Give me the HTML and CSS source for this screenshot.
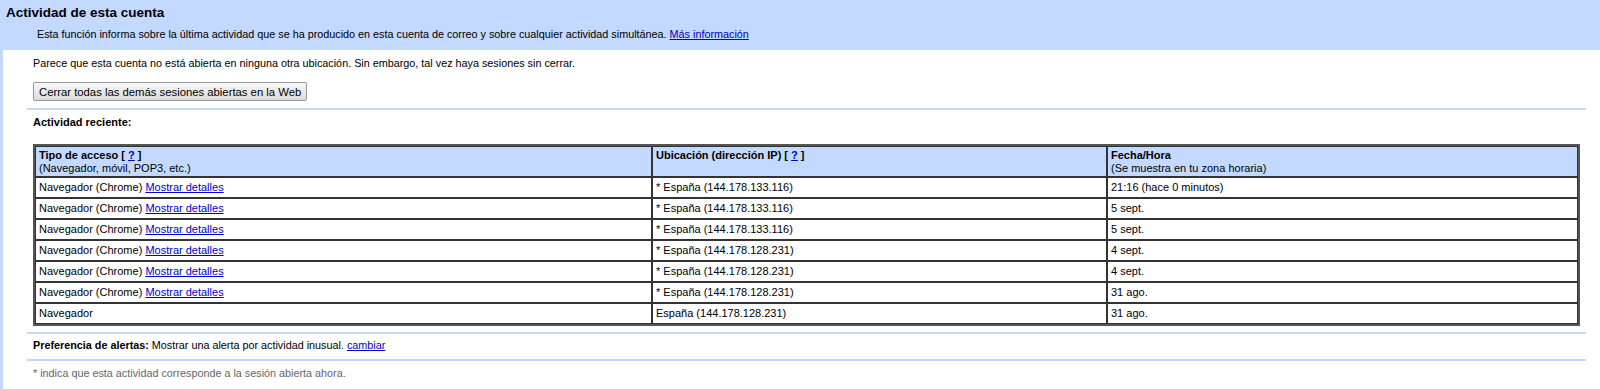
FILE: index.html
```html
<!DOCTYPE html>
<html lang="es">
<head>
    <meta charset="UTF-8">
    <title>Actividad de esta cuenta</title>
    <link rel="stylesheet" href="styles.css">
</head>
<body>
    <div class="header">
        <h1>Actividad de esta cuenta</h1>
        <p>Esta función informa sobre la última actividad que se ha producido en esta cuenta de correo y sobre cualquier actividad simultánea. <a href="#">Más información</a></p>
    </div>

    <div class="main">
        <div class="section top">
            <p>Parece que esta cuenta no está abierta en ninguna otra ubicación. Sin embargo, tal vez haya sesiones sin cerrar.</p>
            <button>Cerrar todas las demás sesiones abiertas en la Web</button>
        </div>

        <div class="section recent">
            <h2>Actividad reciente:</h2>
            <table>
                <colgroup>
                    <col class="c1">
                    <col class="c2">
                    <col>
                </colgroup>
                <tr class="head">
                    <th><b>Tipo de acceso [ <a href="#">?</a> ]</b><br>(Navegador, móvil, POP3, etc.)</th>
                    <th><b>Ubicación (dirección IP) [ <a href="#">?</a> ]</b></th>
                    <th><b>Fecha/Hora</b><br>(Se muestra en tu zona horaria)</th>
                </tr>
                <tr>
                    <td>Navegador (Chrome) <a href="#">Mostrar detalles</a></td>
                    <td>* España (144.178.133.116)</td>
                    <td>21:16 (hace 0 minutos)</td>
                </tr>
                <tr>
                    <td>Navegador (Chrome) <a href="#">Mostrar detalles</a></td>
                    <td>* España (144.178.133.116)</td>
                    <td>5 sept.</td>
                </tr>
                <tr>
                    <td>Navegador (Chrome) <a href="#">Mostrar detalles</a></td>
                    <td>* España (144.178.133.116)</td>
                    <td>5 sept.</td>
                </tr>
                <tr>
                    <td>Navegador (Chrome) <a href="#">Mostrar detalles</a></td>
                    <td>* España (144.178.128.231)</td>
                    <td>4 sept.</td>
                </tr>
                <tr>
                    <td>Navegador (Chrome) <a href="#">Mostrar detalles</a></td>
                    <td>* España (144.178.128.231)</td>
                    <td>4 sept.</td>
                </tr>
                <tr>
                    <td>Navegador (Chrome) <a href="#">Mostrar detalles</a></td>
                    <td>* España (144.178.128.231)</td>
                    <td>31 ago.</td>
                </tr>
                <tr>
                    <td>Navegador</td>
                    <td>España (144.178.128.231)</td>
                    <td>31 ago.</td>
                </tr>
            </table>
        </div>

        <div class="section alerts">
            <p><b>Preferencia de alertas:</b> Mostrar una alerta por actividad inusual. <a href="#">cambiar</a></p>
        </div>

        <div class="note">* indica que esta actividad corresponde a la sesión abierta ahora.</div>
    </div>
</body>
</html>
```

FILE: styles.css
```css
body { margin: 0; background: #c3d9ff; font-family: "Liberation Sans", Arial, sans-serif; font-size: 11px; color: #000; }
a { color: #0000cc; }
p { margin: 0; font-size: 10.8px; }

.header { height: 50px; }
.header h1 { margin: 0; padding: 5px 0 0 6px; font-size: 13.5px; line-height: 16px; }
.header p { padding: 6px 0 0 37px; line-height: 14px; }

.main { margin-left: 3px; background: #fff; padding: 0 14px 20px 24px; }
.section { padding: 0 6px; border-bottom: 2px solid #c3d9ff; }

.top { padding-top: 7px; padding-bottom: 7px; }
.top p { line-height: 12px; }
button { display: block; margin-top: 13px; height: 19px; padding: 0 5px; font-family: inherit; font-size: 11.3px; color: #000;
    background: linear-gradient(#f8f8f8, #dcdcdc); border: 1px solid #999; border-radius: 2px; }

.recent { padding-top: 5px; padding-bottom: 6px; }
.recent h2 { margin: 0 0 15px; font-size: 11px; line-height: 14px; }

table { width: 100%; border-spacing: 0; border: 2px solid #555; }
col.c1 { width: 617px; }
col.c2 { width: 455px; }
th, td { border: 1px solid #333; padding: 2px 3px; text-align: left; vertical-align: top; line-height: 14px; }
th { font-weight: normal; background: #c3d9ff; padding: 2px 3px 1px; line-height: 13px; }
td { height: 15px; }

.alerts { padding-top: 4px; padding-bottom: 7px; }
.alerts p { line-height: 14px; }

.note { padding: 5px 6px 0; color: #666; font-size: 10.8px; line-height: 14px; }
```
